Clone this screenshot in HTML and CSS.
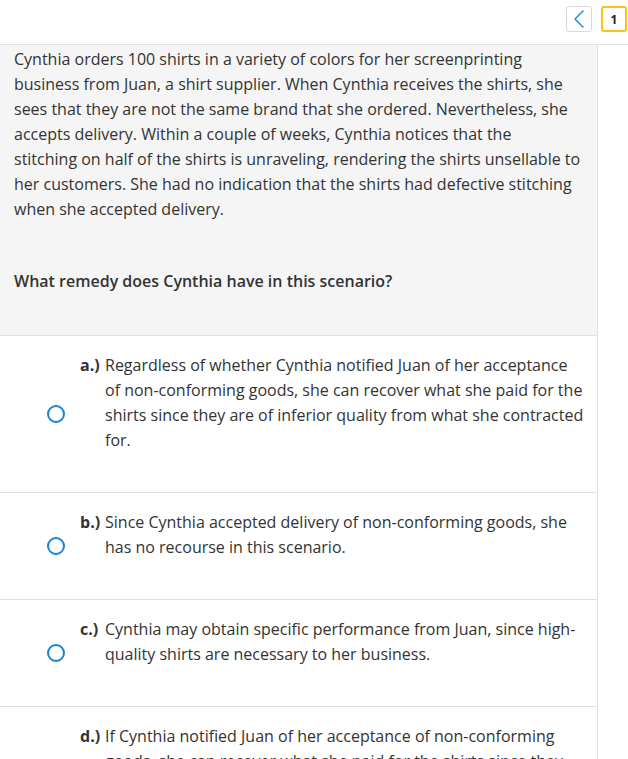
FILE: index.html
```html
<!DOCTYPE html>
<html lang="en">
<head>
<meta charset="utf-8">
<title>Question</title>
<link rel="stylesheet" href="styles.css">
</head>
<body>
<header class="topbar">
  <button class="nav-btn back" aria-label="Previous">
    <svg width="14" height="20" viewBox="0 0 14 20"><path d="M11 2 L3 10 L11 18" fill="none" stroke="#2a8fd8" stroke-width="1.6" stroke-linecap="round" stroke-linejoin="round"/></svg>
  </button>
  <button class="nav-btn page">1</button>
</header>
<div class="layout">
  <main class="content">
    <section class="prompt">
      <p class="scenario">Cynthia orders 100 shirts in a variety of colors for her screenprinting business from Juan, a shirt supplier. When Cynthia receives the shirts, she sees that they are not the same brand that she ordered. Nevertheless, she accepts delivery. Within a couple of weeks, Cynthia notices that the<br>stitching on half of the shirts is unraveling, rendering the shirts unsellable to her customers. She had no indication that the shirts had defective stitching when she accepted delivery.</p>
      <p class="question">What remedy does Cynthia have in this scenario?</p>
    </section>
    <ul class="options">
      <li class="option">
        <span class="radio"></span>
        <div class="opt-body"><span class="opt-label">a.)</span><span class="opt-text">Regardless of whether Cynthia notified Juan of her acceptance of non-conforming goods, she can recover what she paid for the shirts since they are of inferior quality from what she contracted for.</span></div>
      </li>
      <li class="option">
        <span class="radio"></span>
        <div class="opt-body"><span class="opt-label">b.)</span><span class="opt-text">Since Cynthia accepted delivery of non-conforming goods, she has no recourse in this scenario.</span></div>
      </li>
      <li class="option">
        <span class="radio"></span>
        <div class="opt-body"><span class="opt-label">c.)</span><span class="opt-text">Cynthia may obtain specific performance from Juan, since high-quality shirts are necessary to her business.</span></div>
      </li>
      <li class="option">
        <span class="radio"></span>
        <div class="opt-body"><span class="opt-label">d.)</span><span class="opt-text">If Cynthia notified Juan of her acceptance of non-conforming goods, she can recover what she paid for the shirts since they are of inferior quality.</span></div>
      </li>
    </ul>
  </main>
  <aside class="side"></aside>
</div>
</body>
</html>
```
FILE: styles.css
```css
* { box-sizing: border-box; }
html, body { margin: 0; padding: 0; background: #fff; }
body {
  font-family: "Open Sans", Lato, sans-serif;
  font-size: 16px;
  line-height: 25px;
  color: #333;
  height: 759px;
  overflow: hidden;
}
.topbar {
  height: 45px;
  border-bottom: 1px solid #e2e2e2;
  display: flex;
  justify-content: flex-end;
  align-items: flex-start;
  gap: 9px;
  padding: 6px 1px 0 0;
}
.nav-btn {
  width: 26px;
  height: 26px;
  border-radius: 3px;
  background: #fff;
  padding: 0;
  margin: 0;
  display: flex;
  align-items: center;
  justify-content: center;
  font-family: "Open Sans", sans-serif;
}
.back { border: 1px solid #d6d8de; }
.page {
  border: 2px solid #f5c518;
  font-weight: 700;
  font-size: 12px;
  color: #222;
}
.layout { display: flex; min-height: 714px; }
.content {
  width: 598px;
  border-right: 1px solid #e2e2e2;
}
.side { flex: 1; }
.prompt {
  background: #f5f5f5;
  padding: 2px 14px 41px 14px;
  border-bottom: 1px solid #e0e0e0;
}
.prompt p { margin: 0; }
.question { margin-top: 47px !important; font-weight: 600; }
.options { list-style: none; margin: 0; padding: 0; }
.option {
  display: flex;
  align-items: center;
  border-bottom: 1px solid #e0e0e0;
  padding-left: 47px;
}
.radio {
  width: 18px;
  height: 18px;
  border: 2px solid #1a82d4;
  border-radius: 50%;
  flex: none;
}
.opt-body {
  display: flex;
  margin-left: 15px;
  padding: 17px 12px 39px 0;
  flex: 1;
}
.opt-label { font-weight: 700; width: 25px; flex: none; }
.opt-text { flex: 1; }
```
